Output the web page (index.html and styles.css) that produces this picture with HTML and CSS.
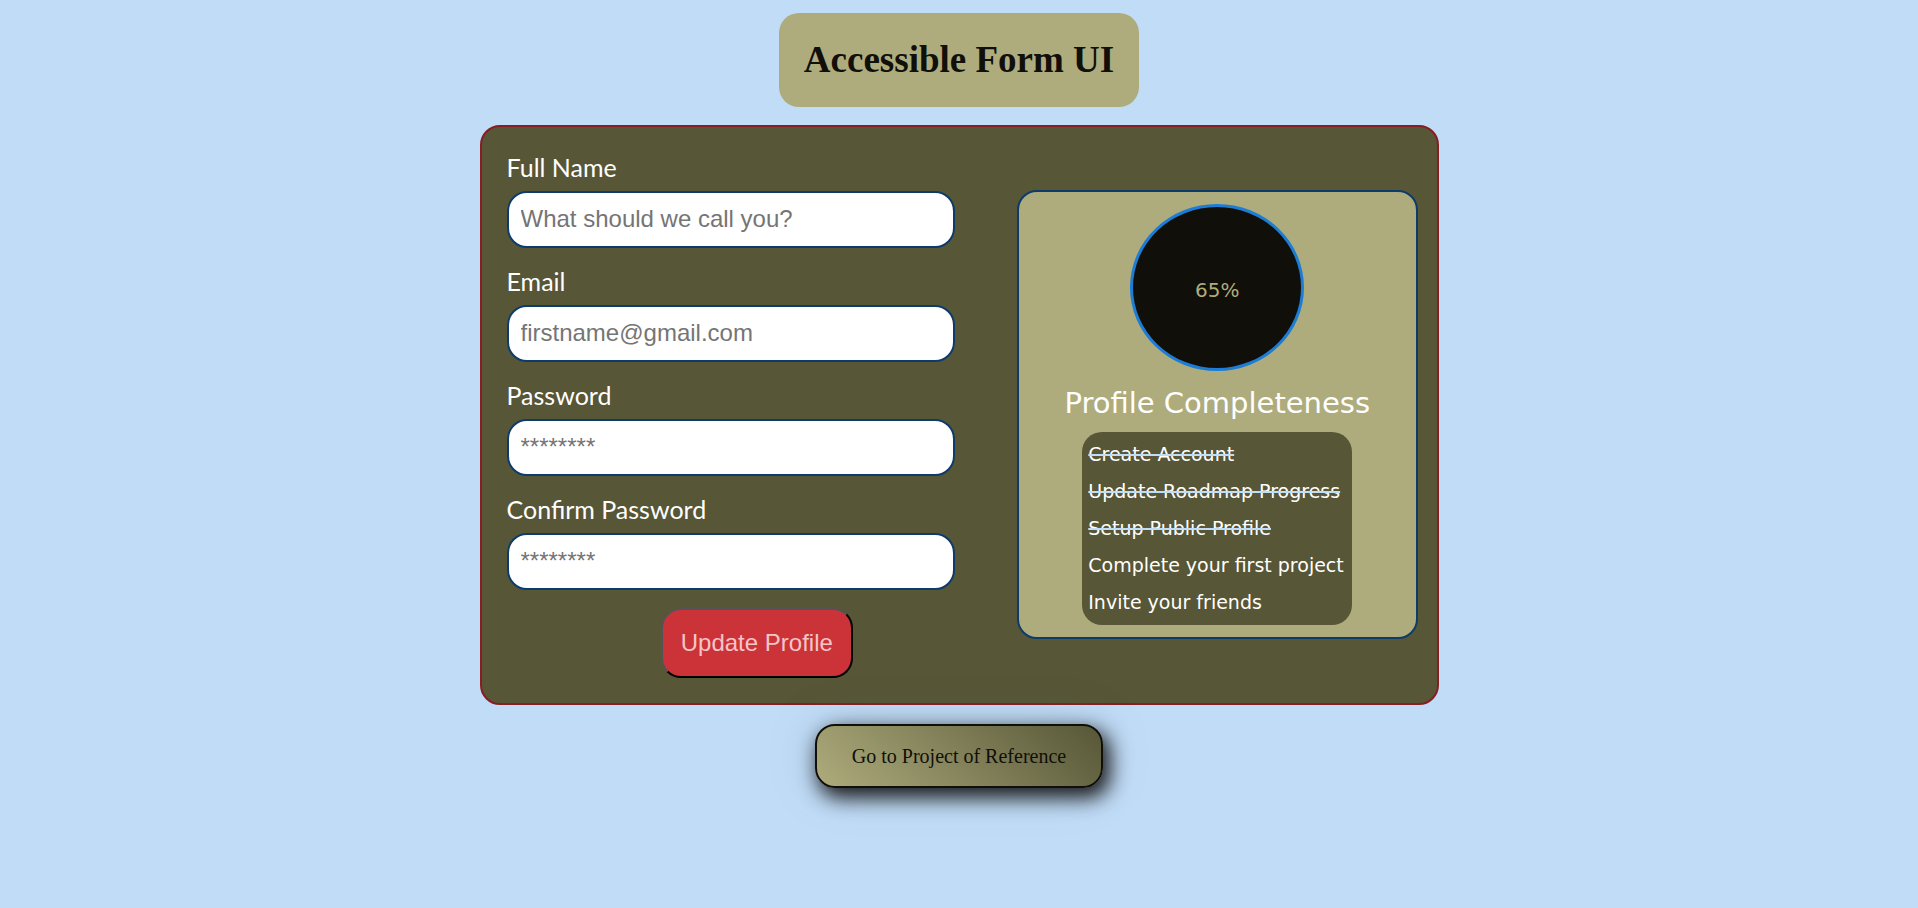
FILE: index.html
```
<!DOCTYPE html>
<html lang="en">
<head>
    <meta charset="UTF-8">
    <meta name="viewport" content="width=device-width, initial-scale=1.0">
    <title>Accessible Form UI</title>
    <link rel="stylesheet" href="styles.css">
</head>
<body>
    <h1 class="title">Accessible Form UI</h1>

    <main class="container">
        <form class="form">
            <label for="name">Full Name</label>
            <input type="text" id="name" placeholder="What should we call you?">

            <label for="email">Email</label>
            <input type="email" id="email" placeholder="firstname@gmail.com">

            <label for="password">Password</label>
            <input type="password" id="password" placeholder="********">

            <label for="confirm">Confirm Password</label>
            <input type="password" id="confirm" placeholder="********">

            <button type="button" class="update-btn">Update Profile</button>
        </form>

        <section class="profile">
            <div class="circle">65%</div>
            <h2>Profile Completeness</h2>
            <ul class="steps">
                <li class="done">Create Account</li>
                <li class="done">Update Roadmap Progress</li>
                <li class="done">Setup Public Profile</li>
                <li>Complete your first project</li>
                <li>Invite your friends</li>
            </ul>
        </section>
    </main>

    <a href="#" class="project-link">Go to Project of Reference</a>
</body>
</html>
```
FILE: styles.css
```
* {
    box-sizing: border-box;
}

body {
    margin: 0;
    padding: 13px 0;
    min-height: 100vh;
    background-color: #c1dcf7;
    display: flex;
    flex-direction: column;
    align-items: center;
}

.title {
    margin: 0 0 18px;
    padding: 24px 25px;
    border-radius: 20px;
    background-color: #aeac7c;
    color: #100f09;
    font-family: "Liberation Serif", serif;
    font-size: 37px;
    line-height: 46px;
}

.container {
    width: 50%;
    min-width: 900px;
    padding: 24px 19px 25px 25px;
    border: 2px solid #861e22;
    border-radius: 20px;
    background-color: #575637;
    display: grid;
    grid-template-columns: 5fr 4fr;
    gap: 10px;
    align-items: center;
}

.form {
    display: flex;
    flex-direction: column;
}

.form label {
    margin-bottom: 8px;
    color: white;
    font-family: Lato, sans-serif;
    font-size: 25px;
    line-height: 32px;
}

.form input {
    width: 90%;
    max-width: 448px;
    height: 57px;
    margin-bottom: 17px;
    padding: 10px 12px 12px;
    border: 2px solid #0d3c6b;
    border-radius: 20px;
    background-color: white;
    font-family: "Liberation Sans", sans-serif;
    font-size: 24px;
}

.form input::placeholder {
    color: #757575;
}

.update-btn {
    align-self: center;
    margin-top: 1px;
    padding: 19px 18px;
    border: 2px outset black;
    border-radius: 20px;
    background-color: #cc3338;
    color: #f3c5c7;
    font-family: "Liberation Sans", sans-serif;
    font-size: 24px;
    line-height: 28px;
    cursor: pointer;
}

.profile {
    padding: 12px;
    border: 2px solid #0d3c6b;
    border-radius: 20px;
    background-color: #aeac7c;
    font-family: "DejaVu Sans", sans-serif;
    display: flex;
    flex-direction: column;
    align-items: center;
}

.circle {
    width: 174px;
    height: 167px;
    padding-top: 4px;
    border: 3px solid #1c7cd6;
    border-radius: 50%;
    background-color: #100f09;
    color: #aeac7c;
    font-size: 20px;
    display: flex;
    justify-content: center;
    align-items: center;
}

.profile h2 {
    margin: 14px 0 10px;
    color: white;
    font-size: 29px;
    font-weight: normal;
    line-height: 37px;
    white-space: nowrap;
}

.steps {
    width: 270px;
    margin: 0;
    padding: 4px 6px;
    border-radius: 20px;
    background-color: #575637;
    color: white;
    font-size: 19px;
    line-height: 37px;
    list-style: none;
    white-space: nowrap;
}

.done {
    text-decoration: line-through 2px #c1dcf7;
}

.project-link {
    margin-top: 19px;
    padding: 18px 35px;
    border: 2px solid #100f09;
    border-radius: 20px;
    background: linear-gradient(45deg, #aeac7c, #575637);
    box-shadow: 5px 8px 20px 2px #1c1c1e, 0 0 50px rgba(80, 110, 120, 0.2);
    color: #100f09;
    font-family: "Liberation Serif", serif;
    font-size: 20px;
    line-height: 24px;
    text-decoration: none;
}
```
